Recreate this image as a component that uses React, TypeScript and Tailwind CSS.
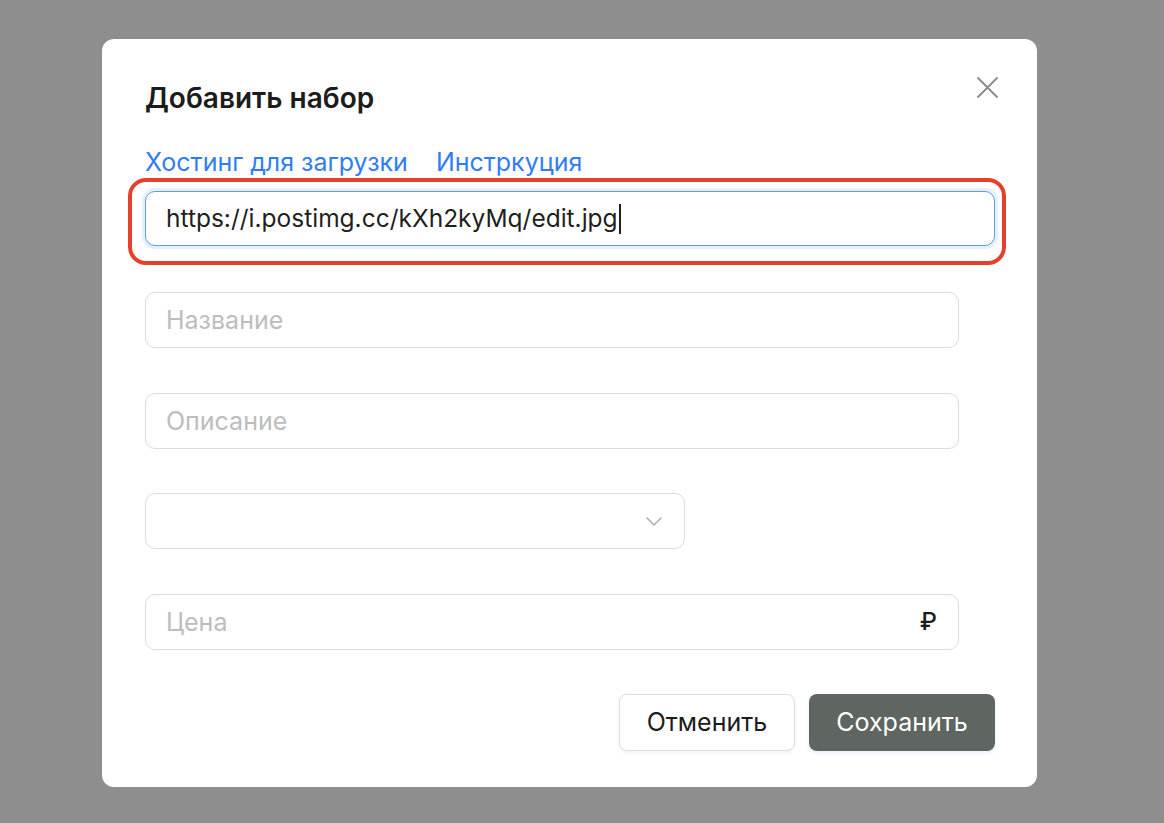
import { useState } from 'react';

const fieldBase =
  'w-full h-[56px] rounded-[10px] border border-[#dcdcdc] bg-white px-[20px] text-[25px] text-[#1f1f1f] placeholder-[#bdbdbd] outline-none';

export default function App() {
  const [name, setName] = useState('');
  const [description, setDescription] = useState('');
  const [price, setPrice] = useState('');
  const url = 'https://i.postimg.cc/kXh2kyMq/edit.jpg';

  return (
    <div className="min-h-screen bg-[#8e8e8e] pt-[39px] pl-[102px]" style={{ fontFamily: 'Inter, "Noto Sans", sans-serif' }}>
      <div className="relative w-[935px] h-[748px] rounded-[12px] bg-white pl-[43px] pr-[42px] pt-[42px]">
        {/* Close */}
        <button className="absolute top-[38px] right-[39px] w-[21px] h-[21px] text-[#8a8a8a]">
          <svg viewBox="0 0 21 21" width="21" height="21" fill="none" stroke="currentColor" strokeWidth="1.8" strokeLinecap="round">
            <path d="M1 1L20 20M20 1L1 20" />
          </svg>
        </button>

        <h2 className="text-[28px] leading-[34px] font-semibold text-[#1c1c1c]">Добавить набор</h2>

        <div className="mt-[32px] flex gap-[28px] text-[25px] leading-[30px] text-[#2f7df6]">
          <a href="#">Хостинг для загрузки</a>
          <a href="#">Инстркуция</a>
        </div>

        {/* URL input (focused) */}
        <div className="relative mt-[14px]">
          <div className="w-full h-[55px] rounded-[10px] border border-[#5b9bf2] bg-white px-[20px] flex items-center text-[24.5px] text-[#1f1f1f] shadow-[0_0_0_3px_#e6f0fd]">
            <span>{url}</span>
            <span className="ml-[1px] inline-block w-[2px] h-[30px] bg-[#1f1f1f]" />
          </div>
          <div className="pointer-events-none absolute -left-[17px] -top-[13px] -right-[11px] -bottom-[19px] rounded-[18px] border-[4px] border-[#e6402c]" />
        </div>

        <div className="mt-[46px] w-[814px]">
          <input value={name} onChange={(e) => setName(e.target.value)} placeholder="Название" className={fieldBase} />
        </div>

        <div className="mt-[45px] w-[814px]">
          <input value={description} onChange={(e) => setDescription(e.target.value)} placeholder="Описание" className={fieldBase} />
        </div>

        <div className="mt-[44px] w-[540px] h-[56px] rounded-[10px] border border-[#dcdcdc] flex items-center justify-end pr-[22px]">
          <svg viewBox="0 0 16 9" width="16" height="9" fill="none" stroke="#a8a8a8" strokeWidth="1.4" strokeLinecap="round" strokeLinejoin="round">
            <path d="M1 1l7 7 7-7" />
          </svg>
        </div>

        <div className="mt-[45px] w-[814px] relative">
          <input value={price} onChange={(e) => setPrice(e.target.value)} placeholder="Цена" className={fieldBase + ' pr-[48px]'} />
          <span className="absolute right-[22px] top-0 h-[56px] flex items-center text-[24px] font-medium text-[#1c1c1c]">₽</span>
        </div>

        <div className="mt-[44px] flex justify-end gap-[14px]">
          <button className="h-[57px] w-[176px] rounded-[8px] border border-[#dcdcdc] bg-white text-[25px] text-[#1c1c1c] shadow-[0_2px_4px_rgba(0,0,0,0.05)]">
            Отменить
          </button>
          <button className="h-[57px] w-[186px] rounded-[8px] bg-[#5f6560] text-[25px] text-white shadow-[0_2px_4px_rgba(60,120,220,0.12)]">
            Сохранить
          </button>
        </div>
      </div>
    </div>
  );
}
